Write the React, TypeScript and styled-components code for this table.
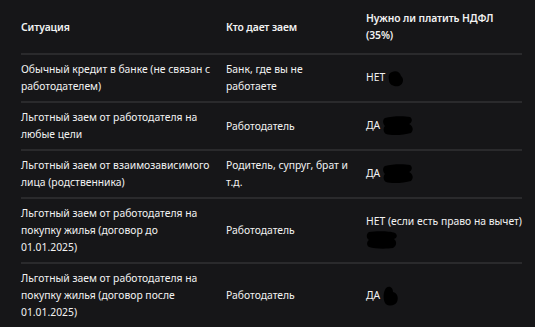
import React from "react";
import styled, { createGlobalStyle } from "styled-components";

const Global = createGlobalStyle`
  html, body { margin: 0; padding: 0; background: #161618; }
  body { font-family: "Noto Sans", "Open Sans", sans-serif; }
`;

const Page = styled.div`
  width: 535px;
  height: 327px;
  overflow: hidden;
  background: #161618;
  padding: 0 13px 0 21px;
  box-sizing: border-box;
`;

const Table = styled.table`
  width: 501px;
  border-collapse: collapse;
  table-layout: fixed;
  color: #f2f2f2;
  font-size: 10.35px;
  line-height: 17px;
`;

const Row = styled.tr`
  border-bottom: 2px solid #2a2a2c;
`;

const Head = styled.th<{ $pr: number }>`
  text-align: left;
  font-weight: 600;
  padding: 10px ${(p) => p.$pr}px 9px 0;
  vertical-align: middle;
  letter-spacing: -0.1px;
`;

const Cell = styled.td<{ $pr: number }>`
  padding: 6px ${(p) => p.$pr}px 6px 0;
  vertical-align: middle;
  font-weight: 400;
`;

const Blob = styled.svg`
  display: inline-block;
  vertical-align: middle;
  margin-left: 2px;
`;

type Mark = "dot" | "wide" | "tall";

function Redact({ kind }: { kind: Mark }) {
  if (kind === "dot")
    return (
      <Blob width="18" height="17" viewBox="0 0 18 17">
        <path d="M5 2 C9 0 13 2 14 6 C17 8 17 14 12 16 C7 17 2 15 2 10 C1 6 2 3 5 2Z" fill="#000" />
      </Blob>
    );
  if (kind === "tall")
    return (
      <Blob width="18" height="22" viewBox="0 0 18 22">
        <path d="M4 3 C8 0 11 3 11 7 C15 8 17 12 15 17 C13 21 6 22 3 18 C1 14 1 7 4 3Z" fill="#000" />
      </Blob>
    );
  return (
    <Blob width="32" height="20" viewBox="0 0 32 20">
      <path d="M3 2 C10 0 22 0 28 1 C31 3 30 7 27 8 C31 10 32 14 29 17 C22 19 10 20 4 18 C1 16 1 12 3 10 C1 8 0 4 3 2Z" fill="#000" />
    </Blob>
  );
}

const Under = styled.span`
  display: block;
  height: 17px;
`;

const UnderBlob = styled.svg`
  display: block;
  margin-top: 1px;
`;

type RowData = { a: string; b: string; c: React.ReactNode };

const rows: RowData[] = [
  {
    a: "Обычный кредит в банке (не связан с работодателем)",
    b: "Банк, где вы не работаете",
    c: (
      <>
        НЕТ
        <Redact kind="dot" />
      </>
    ),
  },
  {
    a: "Льготный заем от работодателя на любые цели",
    b: "Работодатель",
    c: (
      <>
        ДА
        <Redact kind="wide" />
      </>
    ),
  },
  {
    a: "Льготный заем от взаимозависимого лица (родственника)",
    b: "Родитель, супруг, брат и т.д.",
    c: (
      <>
        ДА
        <Redact kind="wide" />
      </>
    ),
  },
  {
    a: "Льготный заем от работодателя на покупку жилья (договор до 01.01.2025)",
    b: "Работодатель",
    c: (
      <>
        НЕТ (если есть право на вычет)
        <Under>
          <UnderBlob width="32" height="18" viewBox="0 0 32 18">
            <path d="M3 1 C10 0 24 0 29 2 C32 4 31 7 28 8 C31 10 31 15 27 17 C20 18 9 18 3 16 C0 14 1 10 3 9 C0 7 0 3 3 1Z" fill="#000" />
          </UnderBlob>
        </Under>
      </>
    ),
  },
  {
    a: "Льготный заем от работодателя на покупку жилья (договор после 01.01.2025)",
    b: "Работодатель",
    c: (
      <>
        ДА
        <Redact kind="tall" />
      </>
    ),
  },
];

const HEAD_PR = [12, 14, 12];
const CELL_PR = [12, 14, 0];

export default function App() {
  return (
    <>
      <Global />
      <Page>
        <Table>
          <colgroup>
            <col style={{ width: 205 }} />
            <col style={{ width: 140 }} />
            <col style={{ width: 156 }} />
          </colgroup>
          <thead>
            <Row>
              <Head $pr={HEAD_PR[0]}>Ситуация</Head>
              <Head $pr={HEAD_PR[1]}>Кто дает заем</Head>
              <Head $pr={HEAD_PR[2]}>Нужно ли платить НДФЛ (35%)</Head>
            </Row>
          </thead>
          <tbody>
            {rows.map((r, i) => (
              <Row key={i}>
                <Cell $pr={CELL_PR[0]}>{r.a}</Cell>
                <Cell $pr={CELL_PR[1]}>{r.b}</Cell>
                <Cell $pr={CELL_PR[2]}>{r.c}</Cell>
              </Row>
            ))}
          </tbody>
        </Table>
      </Page>
    </>
  );
}
